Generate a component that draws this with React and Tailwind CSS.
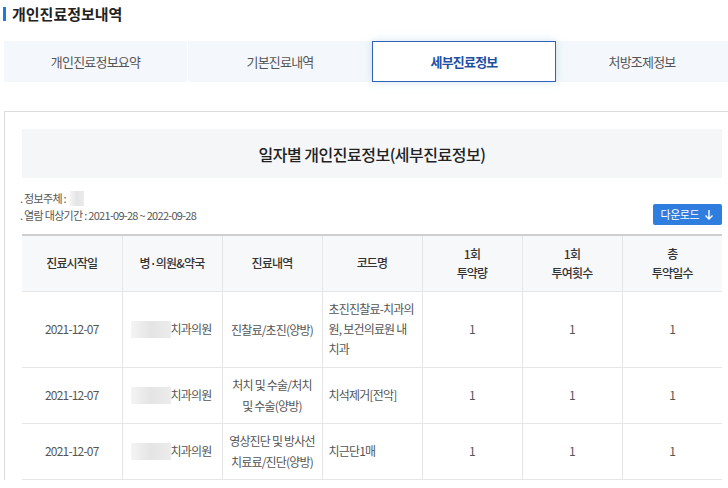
import React from 'react';

const tabs = ['개인진료정보요약', '기본진료내역', '세부진료정보', '처방조제정보'];

const rows = [
  { date: '2021-12-07', desc: ['진찰료/초진(양방)'], code: ['초진진찰료-치과의', '원, 보건의료원 내', '치과'], h: 'h-[76px]' },
  { date: '2021-12-07', desc: ['처치 및 수술/처치', '및 수술(양방)'], code: ['치석제거[전악]'], h: 'h-[56px]' },
  { date: '2021-12-07', desc: ['영상진단 및 방사선', '치료료/진단(양방)'], code: ['치근단1매'], h: 'h-[56px]' },
];

const Blur = ({ className }) => (
  <span className={`inline-block bg-gradient-to-r from-[#f4f4f4] via-[#e4e4e4] to-[#ececec] ${className}`} />
);

const App = () => {
  return (
    <div className="w-[728px] h-[488px] overflow-hidden bg-white text-[#333] font-['Noto_Sans_CJK_KR','Noto_Sans',sans-serif]">
      {/* title */}
      <div className="flex items-center gap-[6px] pl-[3px] pt-[5px] h-[22px]">
        <span className="w-[3px] h-[14px] bg-[#1a7ae6]" />
        <h1 className="text-[15px] font-bold text-[#222] leading-none">개인진료정보내역</h1>
      </div>

      {/* tabs */}
      <div className="flex ml-[4px] mt-[19px] h-[41px] bg-[#f4f8fc] tracking-[-0.8px]">
        {tabs.map((t, i) =>
          i === 2 ? (
            <div key={i} className="w-[184px] flex items-center justify-center bg-white border-[1.5px] border-[#2f62b8] text-[13px] font-bold text-[#1f4fa3] shadow-[0_0_8px_rgba(160,200,230,0.5)]">
              {t}
            </div>
          ) : (
            <div key={i} className={`${i === 3 ? 'flex-1' : 'w-[184px]'} flex items-center justify-center text-[13px] text-[#555] ${i === 0 ? 'border-r border-white' : ''}`}>
              {t}
            </div>
          )
        )}
      </div>

      {/* panel */}
      <div className="ml-[4px] mt-[29px] border-t border-l border-[#dcdcdc] pl-[17px] pt-[17px] pr-[6px]">
        <div className="h-[49px] bg-[#f5f6f8] flex items-center justify-center text-[16px] text-[#222] font-medium tracking-[-0.5px]">
          일자별 개인진료정보(세부진료정보)
        </div>

        <div className="flex items-end justify-between mt-[12px]">
          <div className="text-[11px] text-[#555] leading-[17px] -ml-[2px] tracking-[-0.7px]">
            <div className="flex items-center">. 정보주체 : <Blur className="ml-[4px] w-[14px] h-[15px]" /></div>
            <div>. 열람 대상기간 : 2021-09-28 ~ 2022-09-28</div>
          </div>
          <button className="h-[21px] px-[8px] bg-[#2e7ddf] text-white text-[11px] tracking-[-0.5px] rounded-[2px] flex items-center gap-[5px] mb-[-1px] ml-auto">
            다운로드
            <svg width="10" height="11" viewBox="0 0 10 11" fill="none" stroke="white" strokeWidth="1.4">
              <path d="M5 1v9M1.5 6.5L5 10l3.5-3.5" />
            </svg>
          </button>
        </div>

        <table className="mt-[10px] w-[700px] table-fixed border-collapse text-[12px] tracking-[-0.8px]">
          <thead>
            <tr className="h-[56px] bg-[#f7f8fa] border-t-2 border-[#cfcfcf] text-[#333] font-medium">
              <th className="w-[100px] font-medium border-b border-[#e6e6e6]">진료시작일</th>
              <th className="w-[100px] font-medium border-l border-b border-[#e6e6e6]">병·의원&amp;약국</th>
              <th className="w-[100px] font-medium border-l border-b border-[#e6e6e6]">진료내역</th>
              <th className="w-[100px] font-medium border-l border-b border-[#e6e6e6]">코드명</th>
              <th className="w-[100px] font-medium border-l border-b border-[#e6e6e6] leading-[19px]">1회<br />투약량</th>
              <th className="w-[100px] font-medium border-l border-b border-[#e6e6e6] leading-[19px]">1회<br />투여횟수</th>
              <th className="w-[100px] font-medium border-l border-b border-[#e6e6e6] leading-[19px]">총<br />투약일수</th>
            </tr>
          </thead>
          <tbody className="text-[#555]">
            {rows.map((r, i) => (
              <tr key={i} className={`${r.h} border-b border-[#e6e6e6]`}>
                <td className="text-center">{r.date}</td>
                <td className="border-l border-[#e6e6e6]">
                  <div className="flex items-center justify-end pr-[10px]">
                    <Blur className="w-[40px] h-[17px]" />
                    <span>치과의원</span>
                  </div>
                </td>
                <td className="border-l border-[#e6e6e6] text-center leading-[21px]">
                  {r.desc.map((d, j) => <div key={j}>{d}</div>)}
                </td>
                <td className="border-l border-[#e6e6e6] pl-[6px] leading-[20px]">
                  {r.code.map((d, j) => <div key={j}>{d}</div>)}
                </td>
                <td className="border-l border-[#e6e6e6] text-center">1</td>
                <td className="border-l border-[#e6e6e6] text-center">1</td>
                <td className="border-l border-[#e6e6e6] text-center">1</td>
              </tr>
            ))}
          </tbody>
        </table>
      </div>
    </div>
  );
};

export default App;
